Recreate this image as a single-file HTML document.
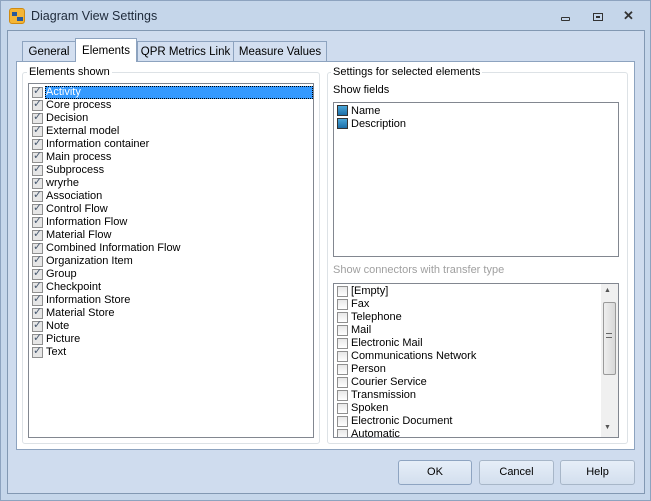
<!DOCTYPE html>
<html><head><style>
*{margin:0;padding:0;box-sizing:border-box}
body{width:651px;height:501px;background:#c5d6ea;font-family:"Liberation Sans",sans-serif;font-size:11px;color:#000;position:relative;overflow:hidden}
.a{position:absolute}
.cb{position:absolute;left:4px;width:11px;height:11px;border:1px solid #8f8f8f;background:linear-gradient(#e8e8e8,#fff)}
.row{position:absolute;left:0;height:13px;line-height:13px;white-space:nowrap}
.row span{position:absolute;left:18px;top:0}
.btn{position:absolute;top:460px;height:25px;border:1px solid #a7b6c8;border-radius:3px;background:linear-gradient(#e6eef8,#d3dfee);text-align:center;line-height:23px;font-size:11px}
.tab{font-size:11.5px}
</style></head><body>
<div class="a" style="left:0;top:0;width:651px;height:501px;border:1px solid #8da3bf"></div>
<div class="a" style="left:9px;top:8px;width:16px;height:16px;border-radius:3px;background:#f4b536;border:1px solid #d08a10"><div class="a" style="left:2px;top:3px;width:5px;height:4px;background:#2a5a9a"></div><div class="a" style="left:7px;top:8px;width:6px;height:4px;background:#2a5a9a"></div></div>
<div class="a" style="left:31px;top:9px;font-size:12.5px;color:#1e2a3a">Diagram View Settings</div>
<div class="a" style="left:561px;top:17px;width:9px;height:4px;border:1px solid #333;border-radius:1px"></div>
<div class="a" style="left:593px;top:13px;width:10px;height:8px;border:1px solid #333"><div class="a" style="left:2px;top:2px;width:4px;height:2px;border:1px solid #333"></div></div>
<div class="a" style="left:623px;top:8px;font-size:13px;font-weight:bold;color:#333">✕</div>
<div class="a" style="left:7px;top:30px;width:638px;height:464px;background:#cfdcee;border:1px solid #8298b2"></div>
<div class="a tab" style="left:22px;top:41px;width:54px;height:21px;border:1px solid #8da3bf;border-bottom:none;background:#d3dff0;text-align:center;line-height:20px">General</div>
<div class="a tab" style="left:75px;top:38px;width:62px;height:24px;border:1px solid #8da3bf;border-bottom:none;background:#fff;text-align:center;line-height:24px;z-index:2">Elements</div>
<div class="a tab" style="left:137px;top:41px;width:97px;height:21px;border:1px solid #8da3bf;border-bottom:none;background:#d3dff0;text-align:center;line-height:20px">QPR Metrics Link</div>
<div class="a tab" style="left:233px;top:41px;width:94px;height:21px;border:1px solid #8da3bf;border-bottom:none;background:#d3dff0;text-align:center;line-height:20px">Measure Values</div>
<div class="a" style="left:16px;top:61px;width:619px;height:389px;background:#fff;border:1px solid #8da3bf"></div>
<div class="a" style="left:22px;top:72px;width:298px;height:372px;border:1px solid #dde2e6;border-radius:3px"></div>
<div class="a" style="left:27px;top:66px;background:#fff;padding:0 2px">Elements shown</div>
<div class="a" style="left:28px;top:83px;width:286px;height:355px;border:1px solid #828790;background:#fff">
<div class="a" style="left:16px;top:2px;width:268px;height:13px;background:#3399ff;border:1px dotted #000"></div>
<div id="L"></div></div>
<div class="a" style="left:327px;top:72px;width:301px;height:372px;border:1px solid #dde2e6;border-radius:3px"></div>
<div class="a" style="left:331px;top:66px;background:#fff;padding:0 2px">Settings for selected elements</div>
<div class="a" style="left:333px;top:84px">Show fields</div>
<div class="a" style="left:333px;top:102px;width:286px;height:155px;border:1px solid #828790">
<div class="row" style="top:2px;width:200px"><div class="cb" style="background:linear-gradient(#4aa6d8,#1d6ea8);border-color:#333;left:3px"></div><span style="left:17px">Name</span></div>
<div class="row" style="top:15px;width:200px"><div class="cb" style="background:linear-gradient(#4aa6d8,#1d6ea8);border-color:#333;left:3px"></div><span style="left:17px">Description</span></div>
</div>
<div class="a" style="left:333px;top:264px;color:#a0a0a0">Show connectors with transfer type</div>
<div class="a" style="left:333px;top:283px;width:286px;height:155px;border:1px solid #828790;overflow:hidden">
<div id="R"></div>
<div class="a" style="left:267px;top:0;width:17px;height:153px;background:#f0f0f0"></div>
<div class="a" style="left:270px;top:3px;font-size:7px;color:#555">▲</div>
<div class="a" style="left:269px;top:18px;width:13px;height:73px;border:1px solid #9a9a9a;border-radius:2px;background:linear-gradient(90deg,#eee,#d8d8d8)"></div>
<div class="a" style="left:272px;top:49px;width:6px;height:5px;border-top:1px solid #666;border-bottom:1px solid #666"></div>
<div class="a" style="left:270px;top:140px;font-size:7px;color:#555">▼</div>
</div>
<div class="btn" style="left:398px;width:74px;border-color:#8ea4c1">OK</div>
<div class="btn" style="left:479px;width:75px">Cancel</div>
<div class="btn" style="left:560px;width:75px">Help</div>
<script>
var l=["Activity","Core process","Decision","External model","Information container","Main process","Subprocess","wryrhe","Association","Control Flow","Information Flow","Material Flow","Combined Information Flow","Organization Item","Group","Checkpoint","Information Store","Material Store","Note","Picture","Text"];
var h="";l.forEach(function(t,i){h+='<div class="row" style="top:'+(2+i*13)+'px;width:280px"><div class="cb" style="left:3px;top:1px;background:#e6e6e6"><span style="left:0;top:-3px;font-size:11px;color:#4a5a70">✓</span></div><span style="left:17px'+(i==0?';color:#fff':'')+'">'+t+'</span></div>'});
document.getElementById("L").innerHTML=h;
var r=["[Empty]","Fax","Telephone","Mail","Electronic Mail","Communications Network","Person","Courier Service","Transmission","Spoken","Electronic Document","Automatic"];
h="";r.forEach(function(t,i){h+='<div class="row" style="top:'+(1+i*13)+'px;width:260px"><div class="cb" style="left:3px;top:1px"></div><span style="left:17px">'+t+'</span></div>'});
document.getElementById("R").innerHTML=h;
</script>
</body></html>
